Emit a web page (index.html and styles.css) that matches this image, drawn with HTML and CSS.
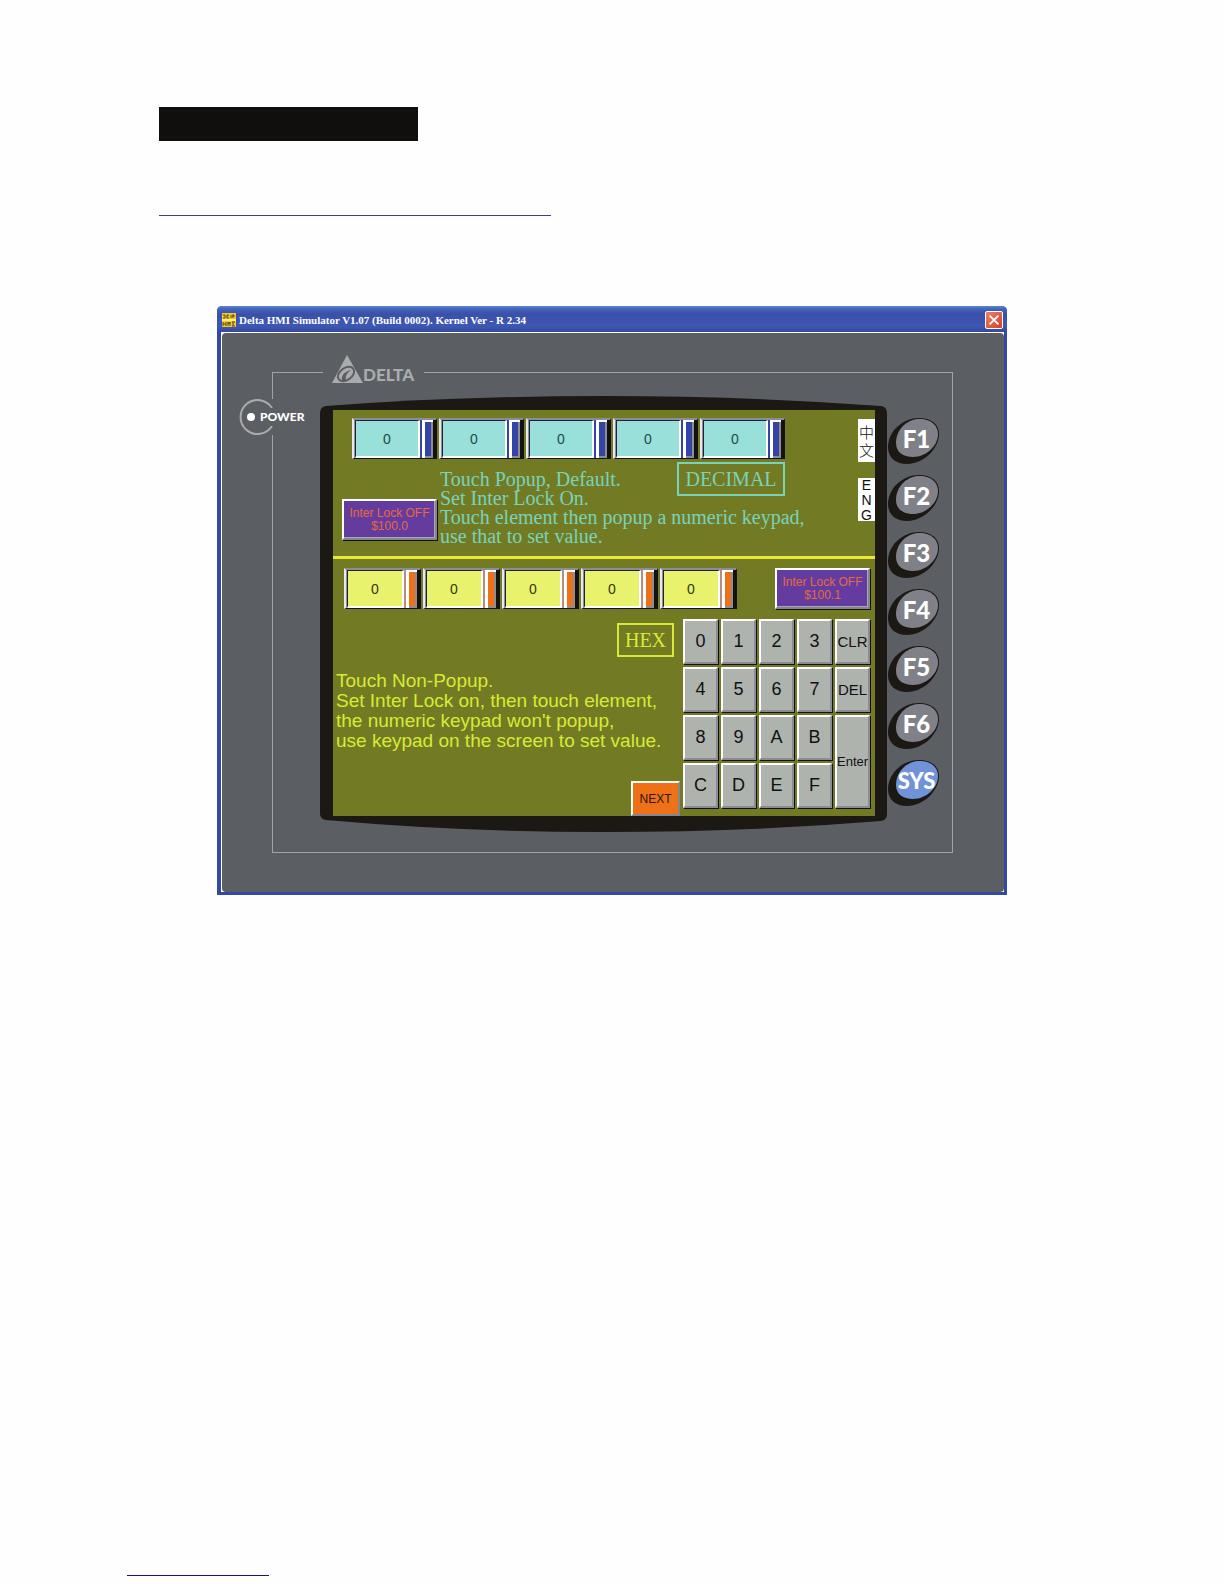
FILE: index.html
```html
<!DOCTYPE html>
<html lang="en">
<head>
<meta charset="utf-8">
<title>Delta HMI Simulator</title>
<link rel="stylesheet" href="styles.css">
</head>
<body>
<main class="sheet">
  <div class="heading-bar"></div>
  <div class="rule"></div>

  <section class="window">
    <header class="titlebar">
      <svg class="app-icon" viewBox="0 0 14 14" aria-hidden="true">
        <rect width="14" height="14" fill="#efc92f"/>
        <path d="M1 2h2v3H1M5 2v3M5 2h2M5 3h1M5 5h2M9 2v3M11 1v4M10 3h3M1 9v4M4 9v4M1 11h3M6 13V9l1 2 1-2v4M11 9v4M10 9h3M10 13h3" fill="none" stroke="#604718" stroke-width="1"/>
        <path d="M0 7h14" stroke="#fff27a" stroke-width="2"/>
      </svg>
      <h1 class="title">Delta HMI Simulator V1.07 (Build 0002). Kernel Ver - R 2.34</h1>
      <button class="close" type="button" aria-label="Close">
        <svg viewBox="0 0 18 18" aria-hidden="true"><path d="M4 4l10 10M14 4l-10 10" stroke="#fff" stroke-width="2" fill="none"/></svg>
      </button>
    </header>

    <div class="client">
    <div class="panel">
      <div class="frame">
        <div class="brand">
          <svg viewBox="0 0 31 29" aria-hidden="true">
            <path d="M15 0L31 28H0z" fill="#a9abae"/>
            <ellipse cx="14" cy="19" rx="9" ry="6" transform="rotate(-35 14 19)" fill="none" stroke="#5b5f64" stroke-width="2"/>
            <path d="M10 26c-1-6 2-9 9-11-4 3-6 6-5 10z" fill="#5b5f64"/>
          </svg>
          <span class="brand-name">DELTA</span>
        </div>
        <div class="power">
          <svg viewBox="0 0 36 36" aria-hidden="true">
            <path d="M33 9A17 17 0 1 0 33 27" fill="none" stroke="#a9abae" stroke-width="2"/>
            <circle cx="12" cy="18" r="4" fill="#fff"/>
          </svg>
          <span class="power-label">POWER</span>
        </div>

        <div class="bezel">
          <svg class="bezel-shape" viewBox="0 0 567 436" preserveAspectRatio="none" aria-hidden="true">
            <path d="M0 17Q0 11 6 10Q140 0 283 0Q427 0 561 10Q567 11 567 17V418Q567 424 561 425Q427 436 283 436Q140 436 6 424Q0 423 0 418z" fill="#1c1814"/>
          </svg>
          <div class="screen">
            <section class="decimal">
              <div class="decimal-main">
                <div class="readouts blue">
                  <div class="readout"><input type="text" value="0" readonly aria-label="Decimal value 1"><span class="lever"></span></div>
                  <div class="readout"><input type="text" value="0" readonly aria-label="Decimal value 2"><span class="lever"></span></div>
                  <div class="readout"><input type="text" value="0" readonly aria-label="Decimal value 3"><span class="lever"></span></div>
                  <div class="readout"><input type="text" value="0" readonly aria-label="Decimal value 4"><span class="lever"></span></div>
                  <div class="readout"><input type="text" value="0" readonly aria-label="Decimal value 5"><span class="lever"></span></div>
                </div>
                <div class="decimal-info">
                  <button class="lock" type="button">Inter Lock OFF<br>$100.0</button>
                  <div class="note">
                    <p class="note-text">Touch Popup, Default.<br>Set Inter Lock On.<br>Touch element then popup a numeric keypad,<br>use that to set value.</p>
                    <span class="mode">DECIMAL</span>
                  </div>
                </div>
              </div>
              <div class="langs">
                <button class="lang zh" type="button">中<br>文</button>
                <button class="lang" type="button">E<br>N<br>G</button>
              </div>
            </section>

            <section class="hex">
              <div class="hex-top">
                <div class="readouts orange">
                  <div class="readout"><input type="text" value="0" readonly aria-label="Hex value 1"><span class="lever"></span></div>
                  <div class="readout"><input type="text" value="0" readonly aria-label="Hex value 2"><span class="lever"></span></div>
                  <div class="readout"><input type="text" value="0" readonly aria-label="Hex value 3"><span class="lever"></span></div>
                  <div class="readout"><input type="text" value="0" readonly aria-label="Hex value 4"><span class="lever"></span></div>
                  <div class="readout"><input type="text" value="0" readonly aria-label="Hex value 5"><span class="lever"></span></div>
                </div>
                <button class="lock" type="button">Inter Lock OFF<br>$100.1</button>
              </div>
              <div class="hex-body">
                <div class="hex-left">
                  <span class="mode mode-hex">HEX</span>
                  <p class="hex-text">Touch Non-Popup.<br>Set Inter Lock on, then touch element,<br>the numeric keypad won't popup,<br>use keypad on the screen to set value.</p>
                  <button class="next" type="button">NEXT</button>
                </div>
                <div class="keypad">
                  <button class="key" type="button">0</button>
                  <button class="key" type="button">1</button>
                  <button class="key" type="button">2</button>
                  <button class="key" type="button">3</button>
                  <button class="key word" type="button">CLR</button>
                  <button class="key" type="button">4</button>
                  <button class="key" type="button">5</button>
                  <button class="key" type="button">6</button>
                  <button class="key" type="button">7</button>
                  <button class="key word" type="button">DEL</button>
                  <button class="key" type="button">8</button>
                  <button class="key" type="button">9</button>
                  <button class="key" type="button">A</button>
                  <button class="key" type="button">B</button>
                  <button class="key enter" type="button">Enter</button>
                  <button class="key" type="button">C</button>
                  <button class="key" type="button">D</button>
                  <button class="key" type="button">E</button>
                  <button class="key" type="button">F</button>
                </div>
              </div>
            </section>
          </div>
        </div>

        <svg class="defs" width="0" height="0" aria-hidden="true">
          <symbol id="knob" viewBox="0 0 51 46">
            <path d="M31 0C43 0 51 6 51 16C51 31 35 46 19 46C8 46 0 40 0 29C0 13 15 0 31 0z" fill="#1c1814"/>
            <path d="M30 1C42 0 50 7 50 16C50 28 38 39 25 39C15 39 8 34 8 25C8 12 18 2 30 1z"/>
          </symbol>
        </svg>
        <div class="fkeys">
          <button class="fkey" type="button"><svg aria-hidden="true"><use href="#knob"/></svg><span>F1</span></button>
          <button class="fkey" type="button"><svg aria-hidden="true"><use href="#knob"/></svg><span>F2</span></button>
          <button class="fkey" type="button"><svg aria-hidden="true"><use href="#knob"/></svg><span>F3</span></button>
          <button class="fkey" type="button"><svg aria-hidden="true"><use href="#knob"/></svg><span>F4</span></button>
          <button class="fkey" type="button"><svg aria-hidden="true"><use href="#knob"/></svg><span>F5</span></button>
          <button class="fkey" type="button"><svg aria-hidden="true"><use href="#knob"/></svg><span>F6</span></button>
          <button class="fkey sys" type="button"><svg aria-hidden="true"><use href="#knob"/></svg><span>SYS</span></button>
        </div>
      </div>
    </div>
    </div>
  </section>

  <div class="footer-rule"></div>
</main>
</body>
</html>
```

FILE: styles.css
```css
* {
  box-sizing: border-box;
}

body {
  margin: 0;
  background: #fefefe;
  font-family: "Liberation Sans", Arial, sans-serif;
}

button,
input {
  margin: 0;
  padding: 0;
  border: 0;
  border-radius: 0;
  font-family: inherit;
}

.sheet {
  display: flex;
  flex-direction: column;
  min-height: 100vh;
  padding: 107px 127px 8px;
}

.heading-bar {
  width: 100%;
  max-width: 259px;
  height: 34px;
  margin-left: 32px;
  background: #100f0d;
}

.rule {
  width: 100%;
  max-width: 392px;
  height: 1px;
  margin: 74px 0 90px 32px;
  background: #3b4378;
}

.footer-rule {
  width: 100%;
  max-width: 142px;
  height: 1px;
  margin-top: auto;
  background: #14147c;
}

/* Window */

.window {
  width: 100%;
  max-width: 790px;
  margin-left: 90px;
  padding: 0 3px 3px 4px;
  border-radius: 5px 5px 0 0;
  background: #3449a6;
}

.titlebar {
  display: flex;
  align-items: center;
  height: 26px;
  margin: 0 -3px 0 -4px;
  padding: 2px 4px 0 5px;
  border-radius: 5px 5px 0 0;
  background: linear-gradient(#5c86d6 0, #4263bb 3px, #3a50a9 8px, #3d57b3 20px, #34499f 26px);
}

.app-icon {
  width: 14px;
  height: 14px;
}

.title {
  flex: 1;
  margin: 0 0 0 3px;
  color: #fff;
  font: bold 11px/16px "Liberation Serif", serif;
  white-space: nowrap;
}

.close {
  width: 18px;
  height: 18px;
  border: 1px solid #fff;
  border-radius: 2px;
  background: linear-gradient(135deg, #e8826a, #d6402a);
}

.close svg {
  display: block;
  width: 16px;
  height: 16px;
}

.client {
  padding: 1px 0 0 1px;
  background: #fff;
}

.panel {
  padding: 39px 51px 39px 50px;
  border-radius: 4px;
  background: #5b5f64;
}

.frame {
  position: relative;
  display: flex;
  align-items: flex-start;
  padding: 23px 13px 20px 47px;
  border: 1px solid #a0a3a5;
}

.brand {
  position: absolute;
  top: -18px;
  left: 50px;
  display: flex;
  align-items: flex-end;
  width: 101px;
  padding-left: 9px;
  background: #5b5f64;
}

.brand svg {
  display: block;
  width: 31px;
  height: 29px;
}

.brand-name {
  color: #a9abae;
  font: 900 17px/18px Lato, sans-serif;
}

.power {
  position: absolute;
  top: 26px;
  left: -34px;
  display: flex;
  align-items: center;
}

.power svg {
  width: 36px;
  height: 36px;
  background: #5b5f64;
}

.power-label {
  margin-left: -15px;
  padding: 2px 0;
  background: #5b5f64;
  color: #fff;
  font: 900 12px/14px Lato, sans-serif;
}

.bezel {
  position: relative;
  flex: 1;
  padding: 14px 12px 16px 13px;
}

.bezel-shape {
  position: absolute;
  inset: 0;
  width: 100%;
  height: 100%;
}

.screen {
  position: relative;
  background: #727b24;
}

/* Decimal half */

.decimal {
  display: flex;
  height: 149px;
  padding-top: 8px;
  border-bottom: 3px solid #e8ea35;
}

.decimal-main {
  flex: 1;
}

.readouts {
  display: flex;
  gap: 2px;
}

.readout {
  display: flex;
  width: 85px;
  height: 41px;
  border: 1px solid #14120f;
  border-top: 2px solid #8d8d95;
  border-left: 2px solid #e8e8ee;
  background: #8d8d95;
}

.readout input {
  flex: 1;
  width: 0;
  margin-left: 1px;
  border: 1px solid;
  border-width: 1px 2px 2px 1px;
  border-color: #20223a #fff #fff #20223a;
  font-size: 14px;
  text-align: center;
}

.lever {
  width: 16px;
  border-right: 3px solid #14120f;
  border-left: 2px solid #3443a6;
  box-shadow: inset 3px 2px #fff, inset -2px -2px #8d8d95;
}

.blue {
  margin-left: 19px;
}

.blue input {
  background: #98e0d9;
  color: #1d4a48;
}

.blue .lever {
  background: #3443a6;
}

.orange .readout {
  width: 77px;
}

.orange input {
  background: #e8f26c;
  color: #33360f;
}

.orange .lever {
  border-left-color: #b98a80;
  background: #ee7118;
}

.decimal-info {
  display: flex;
  align-items: flex-start;
  gap: 3px;
  padding-left: 9px;
}

.lock {
  width: 95px;
  height: 41px;
  border: 2px solid;
  border-color: #fff #85858f #85858f #fff;
  box-shadow: inset -1px -1px #a9a4b8, 1px 1px #14120f;
  background: #643ca0;
  color: #e56a3c;
  font-size: 12px;
  line-height: 13px;
  white-space: nowrap;
}

.decimal-info .lock {
  margin-top: 40px;
}

.note {
  display: grid;
  flex: 1;
}

.note-text,
.note .mode {
  grid-area: 1 / 1;
}

.note-text {
  margin: 11px 0 0;
  color: #7ad2ba;
  font: 20px/19px "Liberation Serif", serif;
  white-space: nowrap;
}

.mode {
  justify-self: end;
  width: 108px;
  height: 34px;
  margin: 3px 73px 0 0;
  border: 2px solid #7ad2ba;
  color: #7ad2ba;
  font: 20px/30px "Liberation Serif", serif;
  text-align: center;
}

.langs {
  display: flex;
  flex-direction: column;
  gap: 16px;
  width: 17px;
  padding-top: 1px;
}

.lang {
  height: 43px;
  background: #fff;
  color: #111;
  font-size: 14px;
  line-height: 15px;
}

.zh {
  font-family: "Noto Sans CJK TC", sans-serif;
  font-size: 15px;
  font-weight: 300;
  line-height: 18px;
}

/* Hex half */

.hex {
  padding-top: 9px;
}

.hex-top {
  display: flex;
  justify-content: space-between;
  padding: 0 5px 0 11px;
}

.hex-body {
  display: flex;
  margin-top: 10px;
}

.hex-left {
  display: flex;
  flex: 1;
  flex-direction: column;
  align-items: flex-end;
}

.mode-hex {
  width: 57px;
  margin: 4px 9px 0 0;
  border-color: #d8ea35;
  color: #d8ea35;
}

.hex-text {
  align-self: flex-start;
  margin: 14px 0 0 3px;
  color: #d8ea35;
  font-size: 19px;
  line-height: 20px;
  white-space: nowrap;
}

.next {
  width: 49px;
  height: 35px;
  margin: auto 3px 0 0;
  border: 2px solid;
  border-color: #fff #85858f #85858f #fff;
  background: #ee7118;
  color: #2a1608;
  font-size: 12px;
}

.keypad {
  display: grid;
  grid-template-columns: repeat(5, 35px);
  grid-auto-rows: 45px;
  gap: 3px;
  margin: 0 5px 8px 0;
}

.key {
  border: 2px solid;
  border-color: #fff #8b8b98 #8b8b98 #fff;
  box-shadow: 1px 1px #14120f;
  background: #aeb3ae;
  color: #111;
  font-size: 18px;
  white-space: nowrap;
}

.word {
  font-size: 15px;
}

.enter {
  grid-row: 3 / span 2;
  grid-column: 5;
  font-size: 13px;
}

/* Function keys */

.defs {
  position: absolute;
}

.fkeys {
  display: flex;
  flex-direction: column;
  gap: 11px;
  margin: 22px 0 0 1px;
}

.fkey {
  display: grid;
  width: 51px;
  height: 46px;
  background: none;
  color: #fff;
  font: 900 24px/42px Lato, sans-serif;
}

.fkey svg,
.fkey span {
  grid-area: 1 / 1;
}

.fkey svg {
  width: 51px;
  height: 46px;
  fill: #808188;
}

.fkey span {
  padding-left: 6px;
}

.sys {
  font-size: 22px;
}

.sys svg {
  fill: #6f92d8;
}
```
